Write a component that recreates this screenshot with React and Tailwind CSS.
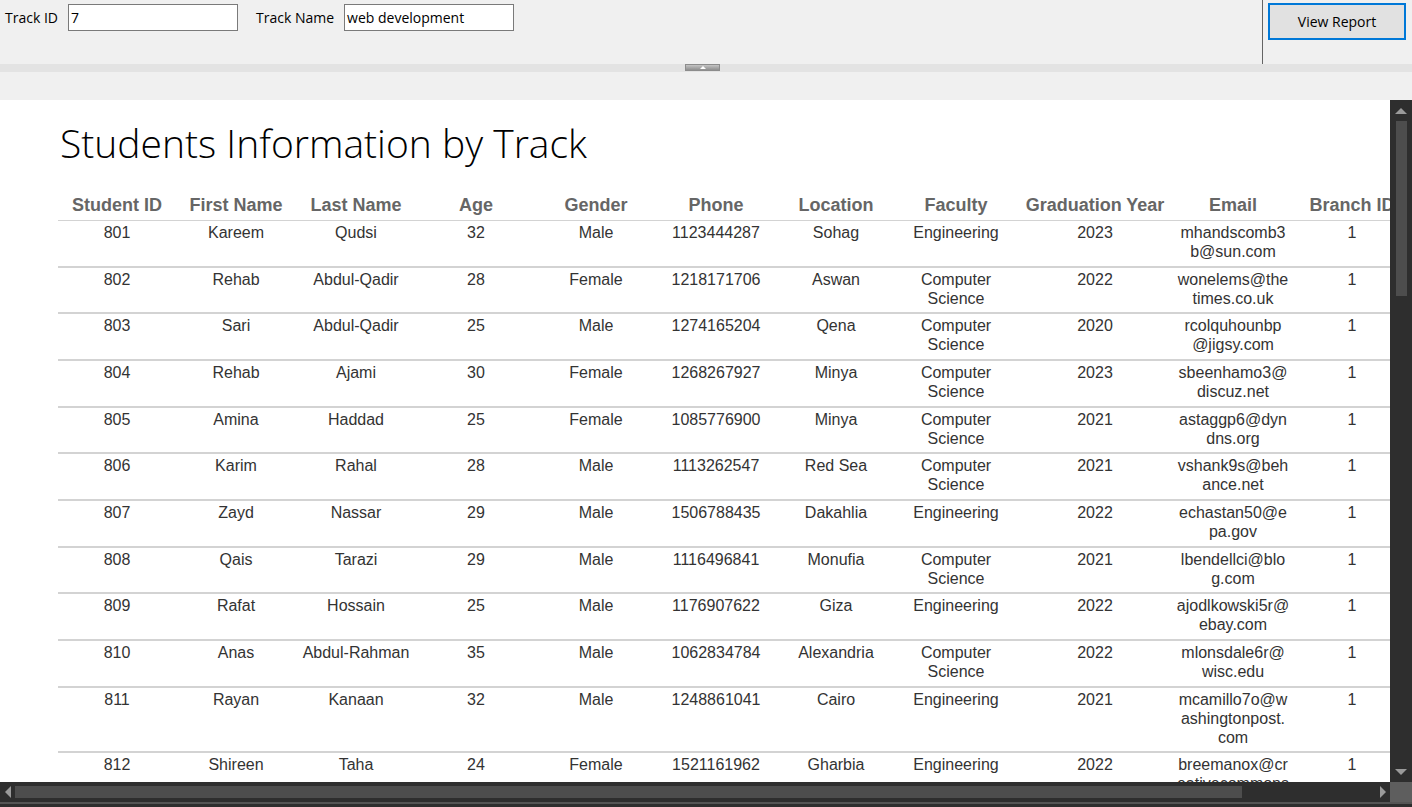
import React from 'react'

const COLUMNS = [
  { label: 'Student ID', w: 'w-[118px]' },
  { label: 'First Name', w: 'w-[120px]' },
  { label: 'Last Name', w: 'w-[120px]' },
  { label: 'Age', w: 'w-[120px]' },
  { label: 'Gender', w: 'w-[120px]' },
  { label: 'Phone', w: 'w-[120px]' },
  { label: 'Location', w: 'w-[120px]' },
  { label: 'Faculty', w: 'w-[120px]' },
  { label: 'Graduation Year', w: 'w-[158px]' },
  { label: 'Email', w: 'w-[118px]' },
  { label: 'Branch ID', w: 'w-[120px]' },
]

const CS = 'Computer Science'
const ENG = 'Engineering'

// email is kept as the lines the report wraps it into
const STUDENTS = [
  [801, 'Kareem', 'Qudsi', 32, 'Male', '1123444287', 'Sohag', ENG, 2023, ['mhandscomb3', 'b@sun.com'], 1],
  [802, 'Rehab', 'Abdul-Qadir', 28, 'Female', '1218171706', 'Aswan', CS, 2022, ['wonelems@the', 'times.co.uk'], 1],
  [803, 'Sari', 'Abdul-Qadir', 25, 'Male', '1274165204', 'Qena', CS, 2020, ['rcolquhounbp', '@jigsy.com'], 1],
  [804, 'Rehab', 'Ajami', 30, 'Female', '1268267927', 'Minya', CS, 2023, ['sbeenhamo3@', 'discuz.net'], 1],
  [805, 'Amina', 'Haddad', 25, 'Female', '1085776900', 'Minya', CS, 2021, ['astaggp6@dyn', 'dns.org'], 1],
  [806, 'Karim', 'Rahal', 28, 'Male', '1113262547', 'Red Sea', CS, 2021, ['vshank9s@beh', 'ance.net'], 1],
  [807, 'Zayd', 'Nassar', 29, 'Male', '1506788435', 'Dakahlia', ENG, 2022, ['echastan50@e', 'pa.gov'], 1],
  [808, 'Qais', 'Tarazi', 29, 'Male', '1116496841', 'Monufia', CS, 2021, ['lbendellci@blo', 'g.com'], 1],
  [809, 'Rafat', 'Hossain', 25, 'Male', '1176907622', 'Giza', ENG, 2022, ['ajodlkowski5r@', 'ebay.com'], 1],
  [810, 'Anas', 'Abdul-Rahman', 35, 'Male', '1062834784', 'Alexandria', CS, 2022, ['mlonsdale6r@', 'wisc.edu'], 1],
  [811, 'Rayan', 'Kanaan', 32, 'Male', '1248861041', 'Cairo', ENG, 2021, ['mcamillo7o@w', 'ashingtonpost.', 'com'], 1],
  [812, 'Shireen', 'Taha', 24, 'Female', '1521161962', 'Gharbia', ENG, 2022, ['breemanox@cr', 'eativecommons', '.org'], 1],
]

const Field = ({ label, value, className = '' }) => (
  <div className={`flex items-center ${className}`}>
    <span className="mr-[10px] text-[14px] text-black">{label}</span>
    <div className="flex h-[27px] w-[170px] items-center border border-[#7a7a7a] bg-white px-[2px] text-[14px] text-black">
      {value}
    </div>
  </div>
)

const Arrow = ({ dir }) => {
  const pts = {
    up: '0,6 6,0 12,6',
    down: '0,0 12,0 6,6',
    left: '6,0 6,12 0,6',
    right: '0,0 0,12 6,6',
  }
  const vertical = dir === 'up' || dir === 'down'
  return (
    <svg width={vertical ? 12 : 6} height={vertical ? 6 : 12} viewBox={vertical ? '0 0 12 6' : '0 0 6 12'}>
      <polygon points={pts[dir]} fill="#9a9a9a" />
    </svg>
  )
}

export default function App() {
  return (
    <div className="flex h-[807px] w-[1412px] flex-col overflow-hidden bg-[#f0f0f0] font-['Open_Sans',sans-serif]">
      {/* Parameter bar */}
      <div className="flex h-[64px] shrink-0">
        <div className="flex flex-1 items-start pl-[5px] pt-[4px]">
          <Field label="Track ID" value="7" />
          <Field label="Track Name" value="web development" className="ml-[18px]" />
        </div>
        <div className="flex w-[150px] border-l border-[#646464] pl-[5px] pt-[3px]">
          <button
            type="button"
            className="h-[37px] w-[138px] border-2 border-[#0078d7] bg-[#e1e1e1] text-[14px] text-black"
          >
            View Report
          </button>
        </div>
      </div>

      {/* Splitter */}
      <div className="flex h-[8px] shrink-0 justify-center bg-[#e3e3e3] pr-[7px]">
        <div className="flex h-[7px] w-[35px] items-center justify-center border border-[#8c8c8c] bg-gradient-to-b from-[#c4c4c4] to-[#8f8f8f]">
          <svg width="6" height="3" viewBox="0 0 6 3">
            <polygon points="0,3 3,0 6,3" fill="#ffffff" />
          </svg>
        </div>
      </div>
      <div className="h-[28px] shrink-0" />

      {/* Report viewer */}
      <div className="flex min-h-0 flex-1">
        <div className="min-w-0 flex-1 overflow-hidden bg-white">
          <div className="pl-[60px] pt-[19px] font-['Open_Sans',sans-serif] text-[39px] font-light leading-[48px] text-black">
            Students Information by Track
          </div>
          <table className="ml-[58px] mt-[28px] w-[1354px] table-fixed font-['Liberation_Sans',Arial,sans-serif]">
            <thead>
              <tr className="border-b border-[#d3d3d3]">
                {COLUMNS.map((c) => (
                  <th
                    key={c.label}
                    className={`${c.w} whitespace-nowrap pb-[4px] text-center text-[18px] font-bold leading-[21px] text-[#666666]`}
                  >
                    {c.label}
                  </th>
                ))}
              </tr>
            </thead>
            <tbody>
              {STUDENTS.map((row, i) => (
                <tr key={row[0]} className={i > 0 ? 'border-t-2 border-[#d3d3d3]' : ''}>
                  {row.map((cell, j) => (
                    <td key={j} className="pb-[4.67px] pt-[2px] text-center align-top text-[16px] leading-[19px] text-[#333333]">
                      {j === 9
                        ? cell.map((line) => (
                            <div key={line} className="whitespace-nowrap">
                              {line}
                            </div>
                          ))
                        : cell}
                    </td>
                  ))}
                </tr>
              ))}
            </tbody>
          </table>
        </div>

        {/* Vertical scrollbar */}
        <div className="flex w-[22px] shrink-0 flex-col items-center bg-[#2e2e2e]">
          <div className="flex h-[21px] items-center justify-center">
            <Arrow dir="up" />
          </div>
          <div className="h-[175px] w-[11px] bg-[#4d4d4d]" />
          <div className="flex-1" />
          <div className="flex h-[21px] items-center justify-center">
            <Arrow dir="down" />
          </div>
        </div>
      </div>

      {/* Horizontal scrollbar */}
      <div className="flex h-[20px] shrink-0 bg-[#2e2e2e]">
        <div className="flex flex-1 items-center">
          <div className="flex w-[15px] justify-center">
            <Arrow dir="left" />
          </div>
          <div className="h-[12px] w-[1227px] bg-[#4d4d4d]" />
          <div className="flex-1" />
          <div className="flex w-[15px] justify-center">
            <Arrow dir="right" />
          </div>
        </div>
        <div className="w-[22px] bg-[#5e5e5e]" />
      </div>
      <div className="h-[2px] shrink-0 bg-[#555555]" />
      <div className="h-[3px] shrink-0 bg-[#2e2e2e]" />
    </div>
  )
}
